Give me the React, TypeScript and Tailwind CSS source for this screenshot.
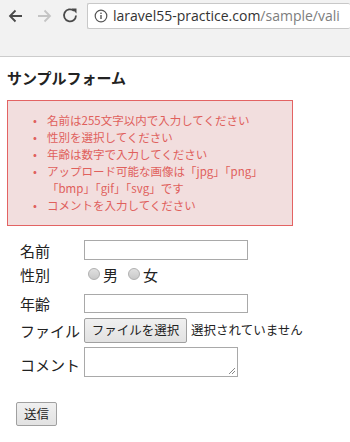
const jp = { fontFamily: '"Noto Sans CJK JP", "Noto Sans", sans-serif' };

const errors = [
  "名前は255文字以内で入力してください",
  "性別を選択してください",
  "年齢は数字で入力してください",
  "アップロード可能な画像は「jpg」「png」\n「bmp」「gif」「svg」です",
  "コメントを入力してください",
];

function Toolbar() {
  return (
    <div className="h-[57px] bg-[#f2f2f2] border-b border-[#cccccc] flex items-start pt-[3px]">
      {/* nav buttons */}
      <div className="w-[87px] h-[26px] flex items-center">
        <svg width="87" height="26" viewBox="0 0 87 26">
          <path d="M22 13H10M15.5 7.5L10 13l5.5 5.5" fill="none" stroke="#4a4a4a" strokeWidth="1.8" />
          <path d="M38 13h12M44.5 7.5L50 13l-5.5 5.5" fill="none" stroke="#c4c4c4" strokeWidth="1.8" />
          <path d="M76 12.5a6 6 0 1 1-2-4.6" fill="none" stroke="#4a4a4a" strokeWidth="1.8" />
          <path d="M71.5 5.5h5v5z" fill="#4a4a4a" />
        </svg>
      </div>
      <div className="flex-1 h-[26px] bg-white border border-[#c8c8c8] rounded-[2px] border-r-0 flex items-center pl-[6px] overflow-hidden">
        <svg width="14" height="14" viewBox="0 0 14 14" className="shrink-0">
          <circle cx="7" cy="7" r="5.8" fill="none" stroke="#555" strokeWidth="1.2" />
          <rect x="6.3" y="6" width="1.4" height="4" fill="#555" />
          <rect x="6.3" y="3.6" width="1.4" height="1.4" fill="#555" />
        </svg>
        <span
          className="ml-[5px] text-[14px] whitespace-nowrap leading-none"
          style={{ fontFamily: '"Open Sans", "Liberation Sans", sans-serif' }}
        >
          <span className="text-[#333]">laravel55-practice.com</span>
          <span className="text-[#7d7d7d]">/sample/vali</span>
        </span>
      </div>
    </div>
  );
}

function Radio({ label }: { label: string }) {
  return (
    <span className="flex items-center">
      <span className="w-[12px] h-[12px] rounded-full border border-[#b0b0b0] bg-gradient-to-b from-[#e0e0e0] to-[#c9c9c9]" />
      <span className="ml-[3px] text-[15px] leading-none text-[#222]">{label}</span>
    </span>
  );
}

export default function App() {
  return (
    <div className="w-[350px] h-[442px] bg-white overflow-hidden text-[#222]" style={jp}>
      <Toolbar />

      <div className="px-[7px]">
        <h1 className="mt-[11px] text-[15px] font-bold leading-[20px] text-[#222]">サンプルフォーム</h1>

        <div className="mt-[12px] w-[286px] h-[126px] border border-[#e36363] bg-[#f2dede] pt-[11px]">
          <ul className="pl-[25px] text-[11.5px] leading-[17px] text-[#e0605c]">
            {errors.map((e) => (
              <li key={e} className="flex">
                <span className="w-[14px] shrink-0">•</span>
                <span className="whitespace-pre">{e}</span>
              </li>
            ))}
          </ul>
        </div>
      </div>

      {/* form */}
      <div className="pl-[20px] flex flex-col">
        <div className="mt-[14px] flex items-center h-[20px]">
          <span className="w-[64px] text-[15px] leading-none">名前</span>
          <div className="w-[164px] h-[20px] border border-[#a9a9a9] bg-white" />
        </div>
        <div className="mt-[4px] flex items-center h-[20px]">
          <span className="w-[64px] text-[15px] leading-none">性別</span>
          <div className="flex items-center gap-[10px] pl-[4px]">
            <Radio label="男" />
            <Radio label="女" />
          </div>
        </div>
        <div className="mt-[10px] flex items-center h-[19px]">
          <span className="w-[64px] text-[15px] leading-none">年齢</span>
          <div className="w-[164px] h-[19px] border border-[#a9a9a9] bg-white" />
        </div>
        <div className="mt-[5px] flex items-center h-[25px]">
          <span className="w-[64px] text-[15px] leading-none whitespace-nowrap">ファイル</span>
          <div className="w-[103px] h-[25px] border border-[#a0a0a0] bg-gradient-to-b from-[#f0f0f0] to-[#e2e2e2] rounded-[2px] flex items-center justify-center text-[12.5px] leading-none text-[#222]">
            ファイルを選択
          </div>
          <span className="ml-[4px] text-[12.5px] leading-none text-[#222] whitespace-nowrap">選択されていません</span>
        </div>
        <div className="mt-[4px] flex items-center h-[30px]">
          <span className="w-[64px] text-[15px] leading-none whitespace-nowrap translate-y-[2px]">コメント</span>
          <div className="relative w-[154px] h-[30px] border border-[#a9a9a9] bg-white">
            <svg width="8" height="8" viewBox="0 0 8 8" className="absolute right-[1px] bottom-[1px]">
              <path d="M7 1L1 7M7 4L4 7" stroke="#888" strokeWidth="1" />
            </svg>
          </div>
        </div>
      </div>

      <div className="pl-[16px] mt-[25px]">
        <div className="w-[41px] h-[24px] border border-[#a0a0a0] bg-gradient-to-b from-[#f0f0f0] to-[#e2e2e2] rounded-[2px] flex items-center justify-center text-[12.5px] leading-none">
          送信
        </div>
      </div>
    </div>
  );
}
